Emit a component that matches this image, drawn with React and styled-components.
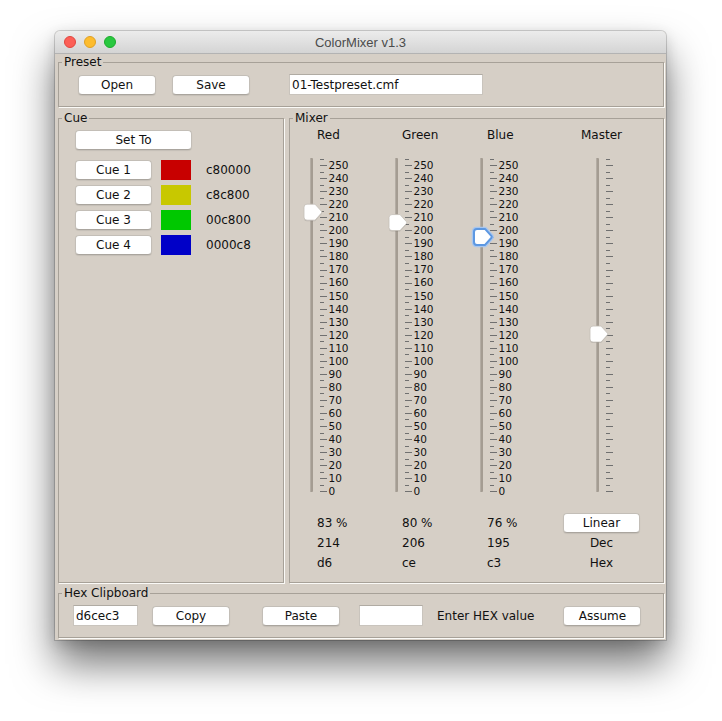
import React from 'react';
import styled, { createGlobalStyle } from 'styled-components';

const FONT = `"DejaVu Sans", "Noto Sans", sans-serif`;

const Global = createGlobalStyle`
  html, body { margin: 0; padding: 0; background: #ffffff; }
  body { font-family: ${FONT}; color: #111; }
`;

const Desktop = styled.div`
  width: 722px;
  height: 721px;
  padding: 31px 0 0 55px;
  box-sizing: border-box;
  overflow: hidden;
`;

const Window = styled.div`
  width: 611px;
  height: 609px;
  display: flex;
  flex-direction: column;
  border-radius: 5px 5px 0 0;
  background: #d6cfc6;
  box-shadow: 0 0 0 1px rgba(0, 0, 0, 0.16), 0 24px 42px rgba(0, 0, 0, 0.55),
    0 4px 14px rgba(0, 0, 0, 0.14);
  overflow: hidden;
`;

const TitleBar = styled.div`
  height: 22px;
  flex: 0 0 22px;
  display: grid;
  grid-template-columns: 1fr auto 1fr;
  align-items: center;
  background: linear-gradient(#ececec, #d4d4d4);
  border-bottom: 1px solid #b3b3b3;
`;

const Lights = styled.div`
  display: flex;
  gap: 8px;
  padding-left: 9px;
`;

const Light = styled.span`
  width: 12px;
  height: 12px;
  border-radius: 50%;
  box-sizing: border-box;
  background: ${(p) => p.$c};
  border: 1px solid ${(p) => p.$b};
`;

const Title = styled.div`
  font: 13px/15px "Liberation Sans", Arial, sans-serif;
  padding-top: 1px;
  color: #4b4b4b;
`;

const Content = styled.div`
  flex: 1;
  display: flex;
  flex-direction: column;
  padding: 1px 2px 2px 3px;
  min-height: 0;
`;

const Group = styled.fieldset`
  margin: 0;
  padding: 0;
  min-width: 0;
  border: 1px solid #a7a198;
  box-shadow: 1px 1px 0 #fbfaf7;
  ${(p) => (p.$w ? `flex: 0 0 ${p.$w}px; box-sizing: border-box;` : 'flex: 1;')}
`;

const Legend = styled.legend`
  margin-left: 3px;
  padding: 0 2px;
  font: 12px/14px ${FONT};
  color: #111;
`;

const TopGroup = styled(Group)`
  flex: none;
  margin-bottom: 4px;
`;

const BottomGroup = styled(Group)`
  flex: none;
  margin-top: 3px;
`;

const Middle = styled.div`
  flex: 1;
  display: flex;
  gap: 5px;
  min-height: 0;
`;

const Row = styled.div`
  display: flex;
  align-items: center;
  height: 21px;
  padding: ${(p) => p.$pad};
`;

const Btn = styled.button`
  width: ${(p) => p.$w}px;
  height: 20px;
  margin: 0 0 0 ${(p) => p.$ml || 0}px;
  padding: 0;
  flex: none;
  background: #ffffff;
  border: 1px solid #c3beb7;
  border-bottom-color: #aaa59e;
  border-radius: 4px;
  box-shadow: 0 1px 1px rgba(0, 0, 0, 0.08);
  font: 12px/18px ${FONT};
  color: #111;
  text-align: center;
`;

const Field = styled.input`
  width: ${(p) => p.$w}px;
  height: 21px;
  margin: 0 0 0 ${(p) => p.$ml || 0}px;
  padding: 0 2px;
  box-sizing: border-box;
  flex: none;
  background: #ffffff;
  border: 1px solid #c9c4bd;
  border-top-color: #b0aba3;
  border-radius: 0;
  outline: none;
  font: 12px ${FONT};
  color: #111;
`;

const Caption = styled.span`
  margin-left: ${(p) => p.$ml || 0}px;
  font: 12px ${FONT};
  color: #111;
  white-space: nowrap;
`;

/* Cue panel */
const CueBody = styled.div`
  padding: 5px 0 0 16px;
  display: flex;
  flex-direction: column;
  gap: 5px;
`;

const CueRow = styled.div`
  display: flex;
  align-items: center;
  height: 20px;
  margin-top: ${(p) => p.$mt || 0}px;
`;

const Swatch = styled.span`
  width: 30px;
  height: 20px;
  margin-left: 9px;
  background: ${(p) => p.$c};
  flex: none;
`;

/* Mixer panel */
const MixerBody = styled.div`
  display: grid;
  grid-template-columns: 85px 85px 89px 77px;
  padding: 2px 0 0 14px;
`;

const Channel = styled.div`
  display: flex;
  flex-direction: column;
  align-items: ${(p) => (p.$center ? 'center' : 'flex-start')};
`;

const ChannelLabel = styled.div`
  font: 12px/16px ${FONT};
  color: #111;
  padding-left: ${(p) => (p.$center ? 0 : 13)}px;
`;

const ScaleSvg = styled.svg`
  display: block;
  margin-top: 7px;
  overflow: visible;
`;

const Values = styled.div`
  margin-top: 18px;
  display: flex;
  flex-direction: column;
  align-items: ${(p) => (p.$center ? 'center' : 'flex-start')};
  padding-left: ${(p) => (p.$center ? 0 : 13)}px;
`;

const Value = styled.div`
  height: 20px;
  font: 12px/20px ${FONT};
  color: #111;
  white-space: nowrap;
`;

const STEP = 1.304;
const BASE = 341.2;

function Scale({ value, labels, focused }) {
  const items = [];
  for (let v = 0; v <= 255; v += 5) {
    const major = v % 10 === 0;
    const y = Math.round(BASE - v * STEP) + 0.5;
    items.push(
      <line
        key={'t' + v}
        x1={16}
        x2={major ? 23 : 20}
        y1={y}
        y2={y}
        stroke="#707070"
        strokeWidth="1"
      />
    );
    if (labels && major) {
      items.push(
        <text
          key={'l' + v}
          x={24.5}
          y={BASE - v * STEP + 3.9}
          fontSize="10.5"
          fontFamily={FONT}
          fill="#111"
        >
          {v}
        </text>
      );
    }
  }
  const cy = BASE - value * STEP;
  const thumb = `M3 ${cy - 8} H11 L17.5 ${cy - 0.8} Q18 ${cy} 17.5 ${cy + 0.8} L11 ${cy + 8} H3 Q0 ${cy + 8} 0 ${cy + 5} V${cy - 5} Q0 ${cy - 8} 3 ${cy - 8} Z`;
  return (
    <ScaleSvg width={labels ? 50 : 24} height={345} viewBox={`0 0 ${labels ? 50 : 24} 345`}>
      <rect x="6" y="8" width="3" height="334" rx="1" fill="#a49c92" />
      <rect x="6" y="8" width="1" height="334" fill="#b4ada4" />
      {items}
      {focused && (
        <path d={thumb} fill="none" stroke="#a8c6ee" strokeWidth="4.5" strokeLinejoin="round" />
      )}
      <path d={thumb} fill="rgba(0,0,0,0.12)" transform="translate(0 1)" />
      <path
        d={thumb}
        fill="#ffffff"
        stroke={focused ? '#5d98e2' : '#c4bfb8'}
        strokeWidth={focused ? 2 : 0.8}
        strokeLinejoin="round"
      />
    </ScaleSvg>
  );
}

const cues = [
  { n: 'Cue 1', c: '#c80000', h: 'c80000' },
  { n: 'Cue 2', c: '#c8c800', h: 'c8c800' },
  { n: 'Cue 3', c: '#00c800', h: '00c800' },
  { n: 'Cue 4', c: '#0000c8', h: '0000c8' },
];

const channels = [
  { name: 'Red', v: 214, pct: '83 %', hex: 'd6' },
  { name: 'Green', v: 206, pct: '80 %', hex: 'ce' },
  { name: 'Blue', v: 195, pct: '76 %', hex: 'c3', focused: true },
];

export default function App() {
  return (
    <>
      <Global />
      <Desktop>
        <Window>
          <TitleBar>
            <Lights>
              <Light $c="#fc5f57" $b="#e0463e" />
              <Light $c="#fdbc2e" $b="#dfa024" />
              <Light $c="#29c840" $b="#1dab2c" />
            </Lights>
            <Title>ColorMixer v1.3</Title>
            <span />
          </TitleBar>
          <Content>
            <TopGroup>
              <Legend>Preset</Legend>
              <Row $pad="5px 0 11px 19px">
                <Btn $w={78}>Open</Btn>
                <Btn $w={78} $ml={16}>Save</Btn>
                <Field $w={194} $ml={39} readOnly value="01-Testpreset.cmf" />
              </Row>
            </TopGroup>

            <Middle>
              <Group $w={226}>
                <Legend>Cue</Legend>
                <CueBody>
                  <CueRow>
                    <Btn $w={117}>Set To</Btn>
                  </CueRow>
                  {cues.map((q, i) => (
                    <CueRow key={q.n} $mt={i === 0 ? 5 : 0}>
                      <Btn $w={77}>{q.n}</Btn>
                      <Swatch $c={q.c} />
                      <Caption $ml={15}>{q.h}</Caption>
                    </CueRow>
                  ))}
                </CueBody>
              </Group>

              <Group>
                <Legend>Mixer</Legend>
                <MixerBody>
                  {channels.map((ch) => (
                    <Channel key={ch.name}>
                      <ChannelLabel>{ch.name}</ChannelLabel>
                      <Scale value={ch.v} labels focused={ch.focused} />
                      <Values>
                        <Value>{ch.pct}</Value>
                        <Value>{ch.v}</Value>
                        <Value>{ch.hex}</Value>
                      </Values>
                    </Channel>
                  ))}
                  <Channel $center>
                    <ChannelLabel $center>Master</ChannelLabel>
                    <Scale value={120.5} />
                    <Values $center>
                      <Btn $w={77}>Linear</Btn>
                      <Value>Dec</Value>
                      <Value>Hex</Value>
                    </Values>
                  </Channel>
                </MixerBody>
              </Group>
            </Middle>

            <BottomGroup>
              <Legend>Hex Clipboard</Legend>
              <Row $pad="5px 0 11px 14px">
                <Field $w={65} readOnly value="d6cec3" />
                <Btn $w={78} $ml={14}>Copy</Btn>
                <Btn $w={78} $ml={32}>Paste</Btn>
                <Field $w={64} $ml={19} readOnly value="" />
                <Caption $ml={14}>Enter HEX value</Caption>
                <Btn $w={78} $ml={29}>Assume</Btn>
              </Row>
            </BottomGroup>
          </Content>
        </Window>
      </Desktop>
    </>
  );
}
